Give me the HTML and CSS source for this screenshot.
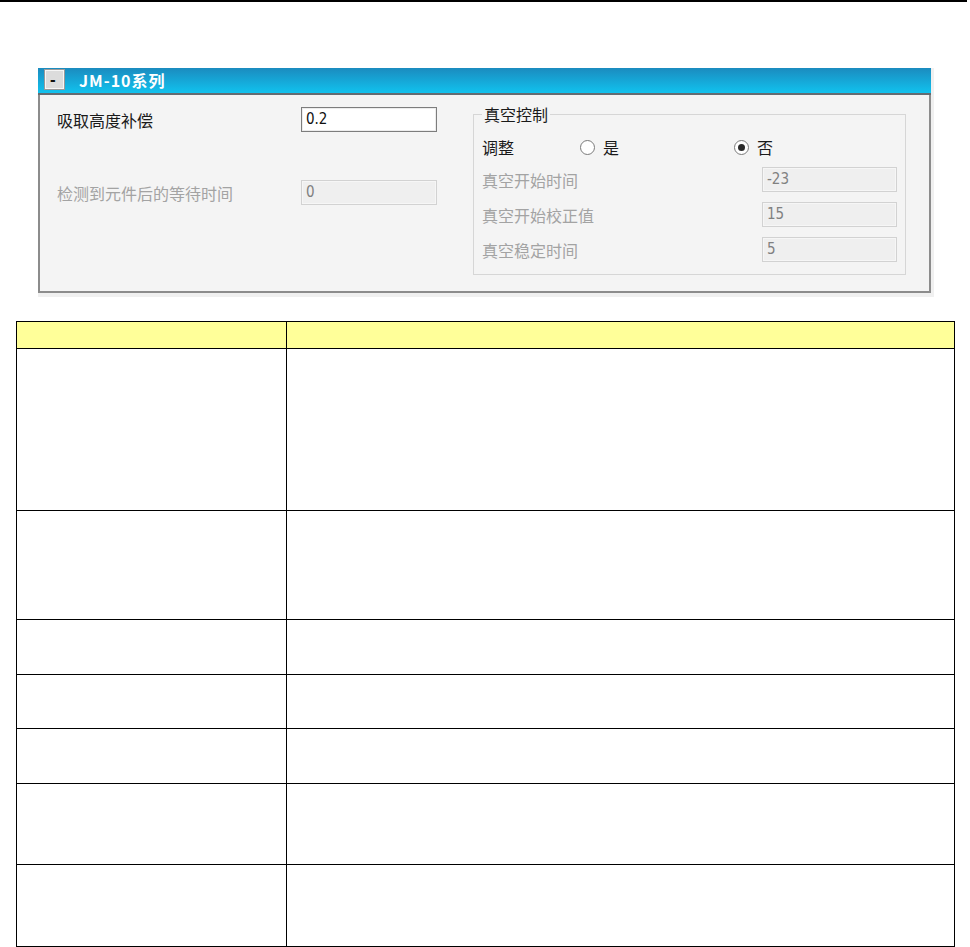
FILE: index.html
```html
<!DOCTYPE html>
<html lang="zh-CN">
<head>
  <meta charset="UTF-8">
  <meta name="viewport" content="width=device-width, initial-scale=1.0">
  <title>JM-10系列 参数</title>
  <link rel="stylesheet" href="styles.css">
</head>
<body>

  <div class="top-rule"></div>

  <div class="shot">
    <div class="window">
      <div class="titlebar">
        <span class="collapse-btn">-</span>
        <span class="title">JM-10系列</span>
      </div>

      <div class="window-body">
        <div class="main-col">
          <div class="field-row first">
            <span class="field-label">吸取高度补偿</span>
            <span class="textbox">0.2</span>
          </div>
          <div class="field-row second disabled">
            <span class="field-label">检测到元件后的等待时间</span>
            <span class="textbox">0</span>
          </div>
        </div>

        <fieldset class="group">
          <legend>真空控制</legend>
          <div class="adjust-row">
            <span class="adjust-label">调整</span>
            <span class="radio"><span class="radio-circle"></span>是</span>
            <span class="radio checked"><span class="radio-circle"></span>否</span>
          </div>
          <div class="group-row disabled">
            <span class="group-label">真空开始时间</span>
            <span class="textbox">-23</span>
          </div>
          <div class="group-row disabled">
            <span class="group-label">真空开始校正值</span>
            <span class="textbox">15</span>
          </div>
          <div class="group-row disabled">
            <span class="group-label">真空稳定时间</span>
            <span class="textbox">5</span>
          </div>
        </fieldset>
      </div>
    </div>
  </div>

  <table class="spec">
    <tr class="head"><th class="col-name"></th><th></th></tr>
    <tr class="r1"><td></td><td></td></tr>
    <tr class="r2"><td></td><td></td></tr>
    <tr class="r3"><td></td><td></td></tr>
    <tr class="r4"><td></td><td></td></tr>
    <tr class="r5"><td></td><td></td></tr>
    <tr class="r6"><td></td><td></td></tr>
    <tr class="r7"><td></td><td></td></tr>
  </table>

</body>
</html>
```

FILE: styles.css
```css
* {
  margin: 0;
  padding: 0;
  box-sizing: border-box;
}

body {
  background-color: #ffffff;
  color: #1a1a1a;
  font-family: "Noto Sans CJK SC", "Liberation Sans", sans-serif;
  width: 970px;
}

.top-rule {
  width: 967px;
  height: 2px;
  background-color: #000;
}

/* screenshot of the settings window */
.shot {
  margin: 66px 0 0 38px;
  width: 896px;
  padding: 0 3px 4px 0;
  background-color: #f0f0f0;
}

.window {
  border: 2px solid #8c8c8c;
  border-top: none;
  background-color: #f4f4f4;
}

.titlebar {
  height: 27px;
  display: flex;
  align-items: center;
  padding: 0 0 2px 6px;
  margin: 0 -2px;
  background: linear-gradient(#1b8bbf, #11c2ee);
  border-bottom: 2px solid #636c72;
}

.collapse-btn {
  width: 21px;
  height: 21px;
  background-color: #dcdcdc;
  border: 2px solid #f6f6f6;
  outline: 1px solid #9a9a9a;
  outline-offset: -1px;
  display: flex;
  align-items: center;
  padding-left: 4px;
  font-family: "Liberation Sans", sans-serif;
  font-weight: bold;
  font-size: 17px;
  line-height: 1;
  color: #111;
}

.title {
  margin-left: 14px;
  color: #ffffff;
  font-weight: bold;
  font-size: 16px;
  letter-spacing: 1px;
  line-height: 20px;
}

.window-body {
  display: flex;
  align-items: flex-start;
  height: 196px;
}

.main-col {
  width: 397px;
  padding-left: 17px;
}

.field-row {
  display: flex;
  align-items: center;
  height: 25px;
}

.field-row.first {
  margin-top: 12px;
}

.field-row.second {
  margin-top: 48px;
}

.field-label {
  width: 244px;
  font-size: 16px;
  line-height: 20px;
  color: #1a1a1a;
}

.textbox {
  width: 136px;
  height: 25px;
  background-color: #ffffff;
  border: 1px solid #7d7d7d;
  box-shadow: inset 0 0 0 1px #ececec;
  padding-left: 4px;
  font-family: "Liberation Sans Narrow", "DejaVu Sans Condensed", "Liberation Sans", sans-serif;
  font-size: 15px;
  line-height: 23px;
  color: #111;
}

.disabled .field-label,
.disabled .group-label {
  color: #a3a3a3;
}

.disabled .textbox {
  background-color: #efefef;
  border-color: #d2d2d2;
  box-shadow: inset 0 0 0 1px #f6f6f6;
  color: #808080;
}

/* 真空控制 group box */
.group {
  margin: 9px 0 0 36px;
  width: 433px;
  border: 1px solid #d6d6d6;
  padding: 0 8px 7px 8px;
}

.group legend {
  padding: 0 2px;
  font-size: 16px;
  line-height: 20px;
  color: #1a1a1a;
}

.adjust-row {
  display: flex;
  align-items: center;
  height: 30px;
  margin-top: 8px;
  font-size: 16px;
}

.adjust-label {
  width: 98px;
}

.radio {
  display: flex;
  align-items: center;
  width: 154px;
}

.radio-circle {
  width: 15px;
  height: 15px;
  border: 1px solid #7a7a7a;
  border-radius: 50%;
  background-color: #ffffff;
  margin-right: 8px;
  position: relative;
}

.radio.checked .radio-circle::after {
  content: "";
  position: absolute;
  left: 3px;
  top: 3px;
  width: 7px;
  height: 7px;
  border-radius: 50%;
  background-color: #2a2a2a;
}

.group-row {
  display: flex;
  align-items: center;
  justify-content: space-between;
  height: 35px;
}

.group-row .textbox {
  width: 135px;
}

.group-label {
  font-size: 16px;
  line-height: 20px;
}

/* parameter table below the screenshot */
.spec {
  margin: 24px 0 0 16px;
  width: 939px;
  border-collapse: collapse;
}

.spec th,
.spec td {
  border: 1px solid #000;
  padding: 0;
}

.spec .head th {
  background-color: #ffff99;
}

.spec .col-name {
  width: 270px;
}

.spec .head { height: 27px; }
.spec .r1 { height: 162px; }
.spec .r2 { height: 109px; }
.spec .r3 { height: 55px; }
.spec .r4 { height: 54px; }
.spec .r5 { height: 55px; }
.spec .r6 { height: 81px; }
.spec .r7 { height: 82px; }
```
